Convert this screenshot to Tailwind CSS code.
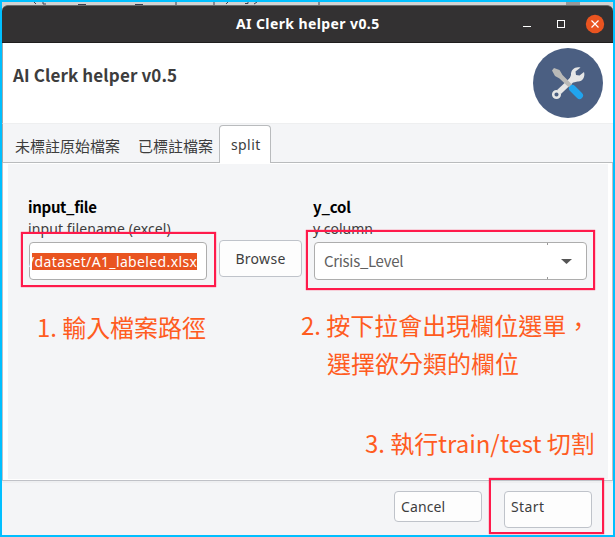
<!DOCTYPE html>
<html lang="zh-Hant">
<head>
<meta charset="utf-8">
<title>AI Clerk helper v0.5</title>
<script src="https://cdn.jsdelivr.net/npm/@tailwindcss/browser@4"></script>
</head>
<body class="overflow-hidden">
<div class="relative flex h-[537px] w-[615px] flex-col overflow-hidden border-2 border-[#00bfff] bg-[#d2d2d2] font-['Noto_Sans','Noto_Sans_CJK_TC',sans-serif] text-[#3d3d3d] whitespace-nowrap">
  <!-- strip of the terminal behind the window -->
  <div class="h-[3px] shrink-0">
    <svg class="block" width="611" height="3" fill="none" stroke="#3a4050"><path d="M32 0l2 2M41 0v2h3M76 2.500h8M133 2.500h8M174 0v3M212 0v3M224 2l2-2M243 1.500h3v-2M252 2l3-2M317 0v3"/><path d="M564 1.500h14" stroke="#999" stroke-width="3"/></svg>
  </div>
  <header class="flex h-[38px] shrink-0 items-center rounded-t-md border-t border-b border-t-[#6b6969] border-b-[#1f1d1e] bg-[#333132]">
    <h1 class="ml-[234px] w-[285px] text-[14px] leading-5 font-bold text-white"><span class="tracking-[0.4px]">AI Clerk helper v0.5</span></h1>
    <svg width="90" height="36" fill="none" stroke="#fff"><path d="M2 20.500h8"/><rect x="36.500" y="14.500" width="7" height="7"/><circle cx="74" cy="18" r="9.200" fill="#e95420" stroke="none"/><path d="M70.500 14.500l7 7M77.500 14.500l-7 7" stroke-width="1.200"/></svg>
  </header>
  <section class="flex h-[80px] shrink-0 items-start justify-between border-l border-[#a8a8a8] bg-white pt-[5px] pr-[10px] pl-[10px]">
    <h2 class="pt-[15px] font-['Noto_Sans_CJK_TC',sans-serif] text-[17px] leading-6 font-bold"><span class="tracking-[0.12px]">AI Clerk helper v0.5</span></h2>
    <svg width="70" height="70" viewBox="0 0 70 70">
      <circle cx="35" cy="35" r="35" fill="#4b5f82"/>
      <path d="M26 44L43 28" stroke="#e6e6e6" stroke-width="5.500"/>
      <circle cx="23.500" cy="46.500" r="3.300" fill="#4b5f82" stroke="#e6e6e6" stroke-width="2.500"/>
      <path d="M47.500 19.500c-5-1.500-10 2-9.500 7.500l-1.500 4 4 3.500 4-1c5 .5 8-5 6.500-9.500l-4.500 3.500-3.500-.5-.5-3.500z" fill="#e6e6e6"/>
      <path d="M21 20l5.500 2 3 5 9.500 9.500-3 3-9.500-9-4.500-2.500-3-5.500z" fill="#b9b9b7"/>
      <path d="M39.500 40.500L46.500 47.500" stroke="#20a4ee" stroke-width="7" stroke-linecap="round"/>
    </svg>
  </section>
  <nav class="flex h-10 shrink-0 items-end border-t border-b border-l border-t-[#eeeff0] border-b-[#b9bbbd] border-l-[#a8a8a8] bg-[#f4f5f7] text-[15px] leading-6">
    <div class="ml-[12px] w-[123px] pb-[4px] font-['Noto_Sans_CJK_TC',sans-serif]">未標註原始檔案</div>
    <div class="w-[81px] pb-[4px] font-['Noto_Sans_CJK_TC',sans-serif]">已標註檔案</div>
    <div class="-mb-px h-[38px] w-[52px] rounded-t-[4px] border border-b-0 border-[#b9bbbd] bg-white pt-[7px] pl-[11px] text-[14px]"><span class="tracking-[0.4px]">split</span></div>
  </nav>
  <main class="flex h-[318px] shrink-0 items-start border border-t-0 border-[#bfc1c7] bg-white pt-px pr-1 pb-px pl-[5px]">
    <div class="flex h-full w-full bg-[#f4f5f7] pt-[32px] pl-5">
      <div class="w-[191px]">
        <h3 class="font-['Noto_Sans_CJK_TC',sans-serif] text-[15px] leading-[22px] font-bold text-black"><span class="tracking-[-0.32px]">input_file</span></h3>
        <p class="text-[14px] leading-[22px]"><span class="tracking-[0.1px]">input filename (excel)</span></p>
        <div class="mt-0.5 ml-px h-[38px] w-[178px] rounded-[4px] border border-[#adadad] bg-white pt-[10px] pl-[2px] text-[14px] text-white"><div class="h-[17px] w-[165px] bg-[#e95420] leading-[17px]"><span class="-ml-[3px] tracking-[0.36px]">/dataset/A1_labeled.xlsx</span></div></div>
      </div>
      <button class="mt-[44px] h-[37px] w-[83px] rounded-[4px] border border-[#bfc3ca] bg-[#fdfdfd] text-[14px]"><span class="tracking-[0.3px]">Browse</span></button>
      <div class="ml-[11px] w-[280px]">
        <h3 class="font-['Noto_Sans_CJK_TC',sans-serif] text-[15px] leading-[22px] font-bold text-black"><span class="tracking-[-0.2px]">y_col</span></h3>
        <p class="text-[14px] leading-[22px]"><span class="tracking-[0px]">y column</span></p>
        <div class="mt-0.5 ml-px flex h-[38px] w-[273px] justify-between rounded-[4px] border border-[#adadad] bg-white pl-[9px] font-['Noto_Sans_CJK_TC',sans-serif] text-[15px] leading-9 text-[#606060]"><span class="tracking-[-0.3px]">Crisis_Level</span>
          <svg width="39" height="36"><path d="M.5 0v2M.5 34v2" stroke="#999"/><path d="M14 16h11l-5.500 5z" fill="#555"/></svg>
        </div>
      </div>
    </div>
  </main>
  <footer class="flex h-[54px] shrink-0 items-start border-t-2 border-[#eeeff1] bg-[#f4f5f7] pt-2 pl-[392px] text-[14px]">
    <button class="h-[31px] w-[88px] rounded-[4px] border border-[#bfc3ca] bg-[#fdfdfd] pl-[6px] text-left"><span class="tracking-[0.1px]">Cancel</span></button>
    <button class="ml-[22px] flex h-[37px] w-[88px] rounded-[4px] border border-[#bfc3ca] bg-[#fdfdfd] pt-[4px] pl-[6px]"><span class="tracking-[0.4px]">Start</span></button>
  </footer>

  <!-- annotations over the window -->
  <div class="absolute top-[230px] left-[19px] h-[55px] w-[195px] border-2 border-[#ff1a4b] shadow-[0_0_1px_#ff1a4b]"></div>
  <div class="absolute top-[228px] left-[304px] h-[60px] w-[289px] border-2 border-[#ff1a4b] shadow-[0_0_1px_#ff1a4b]"></div>
  <div class="absolute top-[476px] left-[487px] h-[56px] w-[115px] border-2 border-[#ff1a4b] shadow-[0_0_1px_#ff1a4b]"></div>
  <div class="font-['Noto_Sans_CJK_TC',sans-serif] text-[24px] leading-[38px] text-[#ff5c1f]">
    <p class="absolute top-[306px] left-[35px]"><span class="tracking-[-0.05px]">1. 輸入檔案路徑</span></p>
    <p class="absolute top-[304px] left-[299px]"><span class="tracking-[0px]">2. 按下拉會出現欄位選單，</span></p>
    <p class="absolute top-[342px] left-[325px]"><span class="tracking-[0px]">選擇欲分類的欄位</span></p>
    <p class="absolute top-[422px] left-[363px]"><span class="tracking-[-0.05px]">3. 執行train/test 切割</span></p>
  </div>
</div>
</body>
</html>
